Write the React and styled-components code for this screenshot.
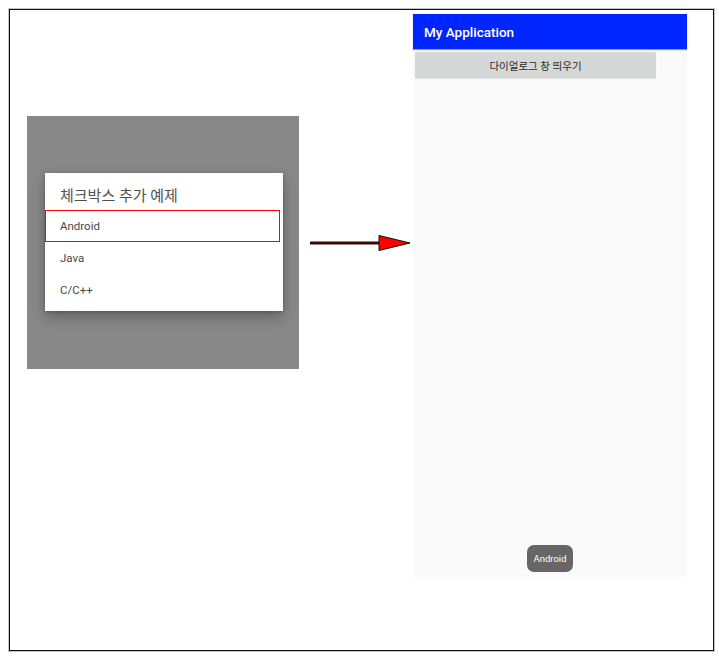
import styled, { createGlobalStyle } from "styled-components";

const Global = createGlobalStyle`
  body {
    margin: 0;
    background: #fff;
    font-family: Roboto, "Noto Sans CJK KR", sans-serif;
  }
`;

const Frame = styled.div`
  box-sizing: border-box;
  margin: 9px;
  width: 705px;
  height: 642px;
  border: 1px solid #111;
  box-shadow: 0 0 0 1px #c4c4c4;
  padding: 4px 0 0 17px;
  display: flex;
  align-items: flex-start;
`;

const Backdrop = styled.div`
  box-sizing: border-box;
  width: 272px;
  height: 253px;
  margin-top: 102px;
  background: #888888;
  padding: 57px 0 0 18px;
`;

const Dialog = styled.div`
  box-sizing: border-box;
  width: 238px;
  height: 138px;
  background: #fff;
  box-shadow: 0 6px 14px rgba(0, 0, 0, 0.28), 0 1px 3px rgba(0, 0, 0, 0.2);
  padding-bottom: 5px;
`;

const DialogTitle = styled.div`
  height: 37px;
  box-sizing: border-box;
  padding: 11px 0 0 15px;
  font-size: 15px;
  line-height: 24px;
  color: #505050;
`;

const Item = styled.div`
  box-sizing: border-box;
  height: 32px;
  width: ${(p) => (p.$selected ? "235px" : "100%")};
  border: 1.5px solid ${(p) => (p.$selected ? "#ff0000" : "transparent")};
  padding-left: 14px;
  display: flex;
  align-items: center;
  font-size: 11.5px;
  color: #484848;
`;

const Arrow = styled.svg`
  display: block;
  margin-top: 219px;
  flex-shrink: 0;
`;

const Phone = styled.div`
  position: relative;
  width: 274px;
  height: 563px;
  background: #fafafa;
  display: flex;
  flex-direction: column;
`;

const AppBar = styled.div`
  height: 35px;
  background: #0026ff;
  box-shadow: 0 1px 1px rgba(60, 90, 255, 0.6);
  display: flex;
  align-items: center;
  padding-left: 11px;
  color: #fff;
  font-size: 13.5px;
  font-weight: 500;
`;

const Content = styled.div`
  padding: 3px 2px;
`;

const Button = styled.div`
  width: 241px;
  height: 26px;
  background: #d6d7d7;
  border-radius: 2px;
  box-shadow: 0 1px 1px rgba(0, 0, 0, 0.12);
  display: flex;
  align-items: center;
  justify-content: center;
  font-size: 10.5px;
  color: #2a2a2a;
`;

const Toast = styled.div`
  position: absolute;
  bottom: 5px;
  left: 50%;
  transform: translateX(-50%);
  width: 46px;
  height: 27px;
  border-radius: 7px;
  background: #666;
  color: #fff;
  font-size: 9.5px;
  display: flex;
  align-items: center;
  justify-content: center;
`;

const languages = ["Android", "Java", "C/C++"];

export default function App() {
  return (
    <>
      <Global />
      <Frame>
        <Backdrop>
          <Dialog>
            <DialogTitle>체크박스 추가 예제</DialogTitle>
            {languages.map((name, i) => (
              <Item key={name} $selected={i === 0}>
                {name}
              </Item>
            ))}
          </Dialog>
        </Backdrop>
        <Arrow width="114" height="20" viewBox="0 0 114 20">
          <line x1="11" y1="10" x2="81" y2="10" stroke="#3a0808" strokeWidth="3" />
          <polygon points="80,2.5 111,10 80,17.5" fill="#ff0000" stroke="#111" strokeWidth="1" />
        </Arrow>
        <Phone>
          <AppBar>My Application</AppBar>
          <Content>
            <Button>다이얼로그 창 띄우기</Button>
          </Content>
          <Toast>Android</Toast>
        </Phone>
      </Frame>
    </>
  );
}
